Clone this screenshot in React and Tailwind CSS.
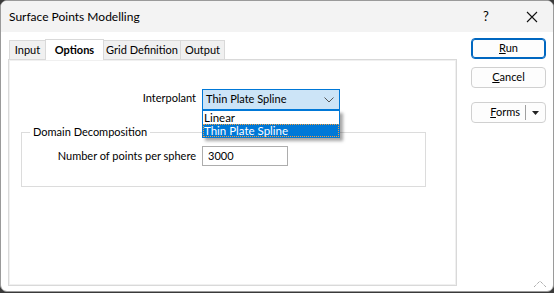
import React from "react";

const font = { fontFamily: 'Lato, "Noto Sans", sans-serif' };

function Tab({ label, active, w }) {
  if (active) {
    return (
      <div className={"h-[21px] flex items-center justify-center bg-white border border-b-0 border-[#d9d9d9] font-bold text-[11px] -mb-px -ml-px relative z-10 " + w}>
        {label}
      </div>
    );
  }
  return (
    <div className={"h-[19px] flex items-center justify-center bg-[#f0f0f0] border border-b-0 border-[#d9d9d9] text-[11px] -ml-px first:ml-0 " + w}>
      {label}
    </div>
  );
}

function Btn({ children, primary }) {
  return (
    <div
      className={
        "w-[75px] h-[21px] rounded-[4px] flex items-center justify-center text-[11px] bg-[#fdfdfd] border " +
        (primary ? "border-[#0067c0] shadow-[inset_0_0_0_1px_#0067c0]" : "border-[#d0d0d0]")
      }
    >
      {children}
    </div>
  );
}

export default function App() {
  return (
    <div className="w-[554px] h-[293px] bg-[#3a3a3a]" style={font}>
      <div className="w-[554px] h-[292px] bg-white border border-[#9a9a9a] rounded-[7px] overflow-hidden flex flex-col text-black">
        {/* title bar */}
        <div className="h-[31px] shrink-0 bg-[#f3f3f3] flex items-center">
          <div className="pl-[8px] text-[12px] flex-1">Surface Points Modelling</div>
          <div className="w-[46px] text-center text-[13px] ml-[6px]">?</div>
          <div className="w-[46px] h-[31px] flex items-center justify-center mr-[-2px]">
            <svg width="12" height="12" viewBox="0 0 12 12">
              <path d="M1 1 L11 11 M11 1 L1 11" stroke="#111" strokeWidth="1.1" />
            </svg>
          </div>
        </div>
        {/* body */}
        <div className="flex flex-1 relative">
          <div className="flex flex-col pl-[7px] pt-[6px] w-[456px]">
            <div className="flex items-end pl-[1px] h-[21px]">
              <Tab label="Input" w="w-[37px]" />
              <Tab label="Options" active w="w-[59px]" />
              <Tab label="Grid Definition" w="w-[78px]" />
              <Tab label="Output" w="w-[45px]" />
            </div>
            <div className="h-[227px] border border-[#d9d9d9] shadow-[inset_0_0_0_1px_#f0f0f0] relative">
              {/* interpolant row */}
              <div className="flex items-start mt-[29px]">
                <div className="w-[187px] text-right text-[11px] pt-[1px]">Interpolant</div>
                <div className="ml-[6px] relative">
                  <div className="w-[138px] h-[21px] bg-[#cce4f7] border border-[#0078d7] flex items-center text-[11px] pl-[3px]">
                    <span className="flex-1">Thin Plate Spline</span>
                    <svg width="10" height="6" viewBox="0 0 10 6" className="mr-[5px]">
                      <path d="M0.5 0.5 L5 5 L9.5 0.5" stroke="#555" fill="none" strokeWidth="1" />
                    </svg>
                  </div>
                  <div className="absolute left-0 top-[21px] w-[138px] bg-white border border-[#0078d7] z-20 shadow-[3px_3px_3px_rgba(0,0,0,0.35)] text-[11.5px] leading-[13px]">
                    <div className="h-[13px] pl-[1px] overflow-hidden">Linear</div>
                    <div className="h-[13px] pl-[1px] overflow-hidden bg-[#0078d7] text-white outline-1 outline-dotted outline-[#f0a040] -outline-offset-1">
                      Thin Plate Spline
                    </div>
                  </div>
                </div>
              </div>
              {/* group box */}
              <fieldset className="ml-[12px] mt-[15px] w-[405px] h-[62px] border border-[#dcdcdc] px-0">
                <legend className="ml-[8px] px-[3px] text-[11px] leading-[14px]">Domain Decomposition</legend>
                <div className="flex items-center mt-[7px]">
                  <div className="w-[174px] text-right text-[11px]">Number of points per sphere</div>
                  <div className="ml-[6px] w-[86px] h-[20px] border border-[#adadad] flex items-center pl-[5px] text-[11px]">
                    3000
                  </div>
                </div>
              </fieldset>
            </div>
          </div>
          <div className="flex flex-col ml-[14px] pt-[6px]">
            <Btn primary>
              <span><u>R</u>un</span>
            </Btn>
            <div className="mt-[8px]">
              <Btn>
                <span><u>C</u>ancel</span>
              </Btn>
            </div>
            <div className="mt-[14px] w-[75px] h-[21px] rounded-[4px] bg-[#fdfdfd] border border-[#d0d0d0] flex items-center text-[11px]">
              <span className="flex-1 text-right pr-[5px]"><u>F</u>orms</span>
              <div className="w-px h-[15px] bg-[#a0a0a0]" />
              <svg width="19" height="6" viewBox="0 0 19 6">
                <path d="M6 1 L13 1 L9.5 5 Z" fill="#222" />
              </svg>
            </div>
          </div>
          <svg width="14" height="8" viewBox="0 0 14 8" className="absolute right-[6px] bottom-[3px]">
            <path d="M1 7 L7 1 L13 7" stroke="#888" strokeDasharray="1 1" fill="none" />
          </svg>
        </div>
      </div>
    </div>
  );
}
